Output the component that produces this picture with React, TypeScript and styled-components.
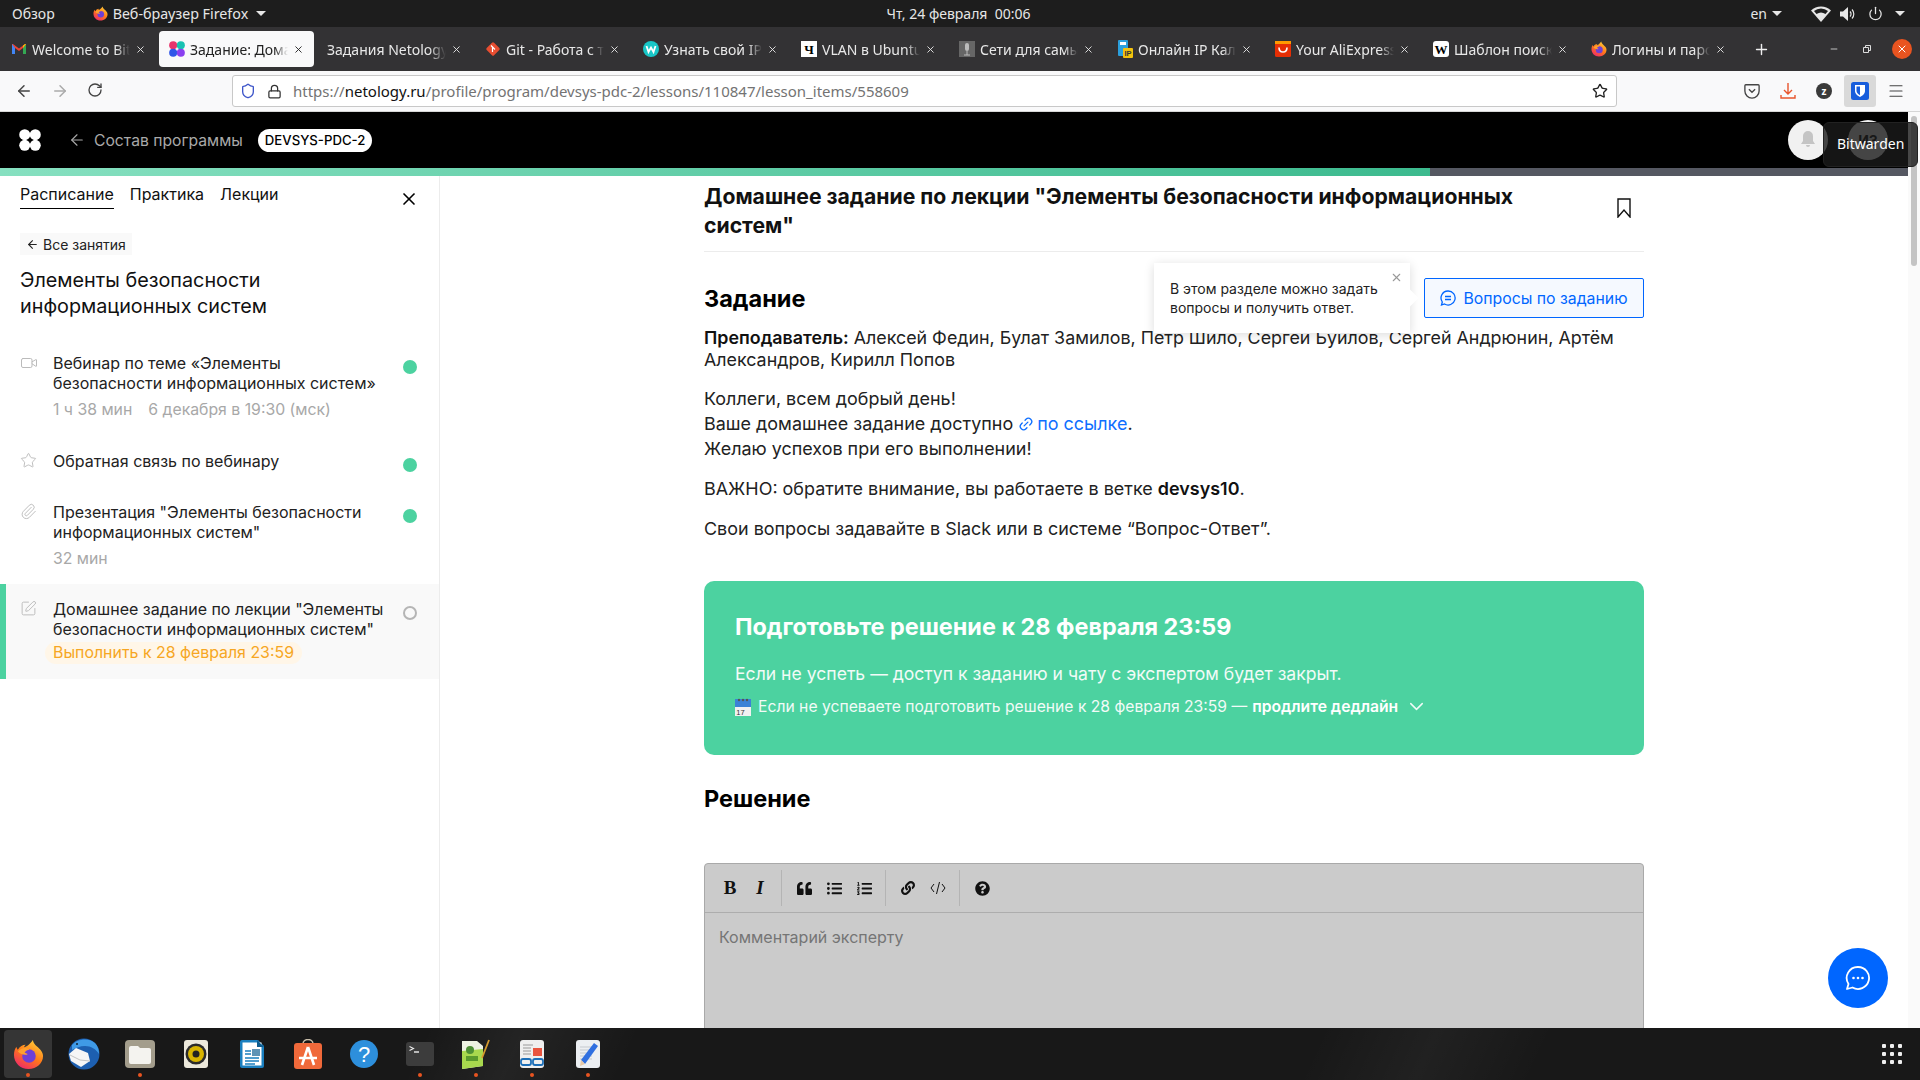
import React from "react";
import styled, { createGlobalStyle } from "styled-components";
import {
  ArrowLeft,
  ArrowRight,
  ChevronDown,
  Link2,
  Lock,
  Menu,
  Minus,
  Paperclip,
  Plus,
  Power,
  RotateCw,
  Shield,
  SquarePen,
  Star,
  Video,
  X,
} from "lucide-react";
import { FaLink, FaListOl, FaListUl, FaQuestionCircle, FaQuoteLeft } from "react-icons/fa";

const GlobalStyle = createGlobalStyle`
  html, body {
    margin: 0;
    padding: 0;
    width: 1920px;
    height: 1080px;
    overflow: hidden;
    background: #fff;
  }
  * {
    box-sizing: border-box;
  }
`;

const SYSTEM_FONT = `"Noto Sans", "Open Sans", sans-serif`;
const SITE_FONT = `Inter, "Noto Sans", sans-serif`;

const Screen = styled.div`
  width: 1920px;
  height: 1080px;
  display: flex;
  flex-direction: column;
  overflow: hidden;
  position: relative;
  font-family: ${SITE_FONT};
`;

/* gnome top bar */
const TopBar = styled.div`
  height: 27px;
  flex: none;
  background: #1d1d1d;
  color: #e6e6e6;
  font: 14px ${SYSTEM_FONT};
  display: grid;
  grid-template-columns: 1fr auto 1fr;
  align-items: center;
  padding: 0 15px 0 12px;
`;

const TopLeft = styled.div`
  display: flex;
  align-items: center;
  gap: 38px;
`;

const TopApp = styled.div`
  display: flex;
  align-items: center;
  gap: 5px;
  font-size: 14.3px;
`;

const TopRight = styled.div`
  display: flex;
  align-items: center;
  justify-content: flex-end;
`;

const Caret = styled.span`
  width: 0;
  height: 0;
  border-left: 5px solid transparent;
  border-right: 5px solid transparent;
  border-top: 5px solid #e6e6e6;
  display: inline-block;
  margin-left: 3px;
`;

const LangLabel = styled.span`
  margin-right: 29px;
  display: flex;
  align-items: center;
  gap: 2px;
`;

const TrayIcon = styled.span<{ $gap: number }>`
  display: flex;
  align-items: center;
  margin-right: ${(p) => p.$gap}px;
`;

/* firefox tabs */
const TabStrip = styled.div`
  height: 44px;
  flex: none;
  background: #333234;
  display: flex;
  align-items: center;
  padding-left: 1px;
`;

const Tab = styled.div<{ $active?: boolean }>`
  flex: 0 0 ${(p) => (p.$active ? 155 : 158)}px;
  margin-right: ${(p) => (p.$active ? 3 : 0)}px;
  min-width: 0;
  height: 36px;
  display: flex;
  align-items: center;
  padding: 0 ${(p) => (p.$active ? 10 : 13)}px 0 10px;
  gap: 5px;
  border-radius: 4px;
  background: ${(p) => (p.$active ? "#f9f9fa" : "transparent")};
  color: ${(p) => (p.$active ? "#222" : "#e8e8e8")};
  font: 14px ${SYSTEM_FONT};
`;

const TabTitle = styled.span`
  flex: 1;
  min-width: 0;
  overflow: hidden;
  white-space: nowrap;
  -webkit-mask-image: linear-gradient(to right, #000 86%, transparent);
  mask-image: linear-gradient(to right, #000 86%, transparent);
`;

const NewTab = styled.div`
  width: 44px;
  display: flex;
  justify-content: center;
  color: #eee;
`;

const WindowControls = styled.div`
  margin-left: auto;
  display: flex;
  align-items: center;
  gap: 15px;
  padding-right: 8px;
  color: #ddd;
`;

const WindowButton = styled.div`
  width: 18px;
  display: flex;
  justify-content: center;
`;

const CloseWindow = styled.div`
  width: 20px;
  height: 20px;
  margin-left: 1px;
  border-radius: 50%;
  background: #e95420;
  color: #fff;
  display: flex;
  align-items: center;
  justify-content: center;
`;

/* url row */
const NavBar = styled.div`
  height: 41px;
  flex: none;
  background: #f9f9fa;
  border-bottom: 1px solid #d6d6d6;
  display: flex;
  align-items: center;
  color: #444;
  padding-left: 15px;
`;

const NavButtons = styled.div`
  width: 217px;
  display: flex;
  gap: 18px;
`;

const UrlBox = styled.div`
  width: 1385px;
  height: 32px;
  background: #fff;
  border: 1px solid #c8c8c8;
  border-radius: 3px;
  display: flex;
  align-items: center;
  padding: 0 8px 0 7px;
  gap: 11px;
  font: 15px ${SYSTEM_FONT};
  color: #737373;
`;

const UrlText = styled.span`
  flex: 1;
  b {
    font-weight: 400;
    color: #111;
  }
`;

const NavTools = styled.div`
  flex: 1;
  display: flex;
  align-items: center;
  padding-left: 117px;
`;

const NavTool = styled.div<{ $selected?: boolean }>`
  flex: 0 0 36px;
  height: 32px;
  display: flex;
  align-items: center;
  justify-content: center;
  &::before {
    content: "";
    display: ${(p) => (p.$selected ? "block" : "none")};
    position: absolute;
    width: 32px;
    height: 32px;
    border-radius: 3px;
    background: #d9d9d9;
  }
  svg, div {
    position: relative;
  }
`;

const ZBadge = styled.div`
  width: 16px;
  height: 16px;
  border-radius: 50%;
  background: #3a3a3a;
  color: #fff;
  font: 700 10px ${SYSTEM_FONT};
  display: flex;
  align-items: center;
  justify-content: center;
`;

/* web page */
const PageRow = styled.div`
  flex: 1;
  min-height: 0;
  display: flex;
`;

const Page = styled.div`
  flex: 1;
  min-width: 0;
  display: flex;
  flex-direction: column;
`;

const Scrollbar = styled.div`
  flex: 0 0 12px;
  background: #fafafa;
  padding: 4px 3px 0;
`;

const ScrollThumb = styled.div`
  height: 150px;
  border-radius: 3px;
  background: #c4c4c4;
`;

const SiteHeader = styled.div`
  height: 56px;
  flex: none;
  background: #000;
  display: flex;
  align-items: center;
  padding-left: 19px;
`;

const BackLink = styled.div`
  display: flex;
  align-items: center;
  gap: 8px;
  margin-left: 27px;
  color: #a9a9a9;
  font-size: 15.7px;
`;

const CodePill = styled.div`
  margin-left: 15px;
  height: 23px;
  padding: 0 7px;
  border-radius: 12px;
  background: #fff;
  color: #000;
  font-size: 13.2px;
  font-weight: 500;
  display: flex;
  align-items: center;
`;

const HeaderRight = styled.div`
  margin-left: auto;
  display: flex;
  gap: 20px;
  padding-right: 20px;
`;

const Avatar = styled.div`
  width: 40px;
  height: 40px;
  border-radius: 50%;
  background: #f1f1f1;
  color: #111;
  font-size: 14px;
  font-weight: 700;
  display: flex;
  align-items: center;
  justify-content: center;
`;

const BrowserTip = styled.div`
  position: absolute;
  left: 1823px;
  top: 122px;
  width: 95px;
  height: 45px;
  background: rgba(26, 26, 26, 0.8);
  border: 1px solid #222;
  border-radius: 6px;
  color: #fff;
  font: 14px ${SYSTEM_FONT};
  display: flex;
  align-items: center;
  padding: 0 0 2px 13px;
`;

const ProgressTrack = styled.div`
  height: 8px;
  flex: none;
  background: #555862;
`;

const ProgressFill = styled.div`
  width: 1430px;
  height: 100%;
  background: linear-gradient(to right, #86e0c0, #3cba8e);
`;

const Body = styled.div`
  flex: 1;
  min-height: 0;
  display: flex;
  overflow: hidden;
`;

const Sidebar = styled.aside`
  flex: 0 0 440px;
  border-right: 1px solid #ececec;
`;

const SideTabs = styled.div`
  display: flex;
  align-items: flex-start;
  gap: 16px;
  padding: 7px 20px 0 20px;
`;

const SideTab = styled.div<{ $active?: boolean }>`
  font-size: 16px;
  line-height: 22px;
  color: #111;
  padding-bottom: 3px;
  border-bottom: 1.5px solid ${(p) => (p.$active ? "#000" : "transparent")};
`;

const SideClose = styled.div`
  margin-left: auto;
  margin-top: 6px;
  line-height: 0;
  color: #000;
`;

const AllLessons = styled.div`
  margin: 24px 0 0 20px;
  width: 112px;
  height: 22px;
  background: #f9f9f9;
  display: flex;
  align-items: center;
  gap: 4px;
  padding-left: 6px;
  font-size: 14px;
  color: #222;
`;

const LessonTitle = styled.h2`
  margin: 12px 0 0 20px;
  font-size: 19.8px;
  line-height: 26px;
  font-weight: 400;
  color: #111;
`;

const LessonList = styled.div`
  margin-top: 34px;
  display: flex;
  flex-direction: column;
`;

const LessonItem = styled.div<{ $active?: boolean; $height: number; $pad?: number }>`
  height: ${(p) => p.$height}px;
  display: grid;
  grid-template-columns: 33px 1fr 14px;
  padding: ${(p) => p.$pad ?? 0}px 22px 0 20px;
  background: ${(p) => (p.$active ? "#f9f9f9" : "transparent")};
  box-shadow: ${(p) => (p.$active ? "inset 6px 0 0 #4cd2a0" : "none")};
`;

const LessonIcon = styled.div`
  color: #b9b9b9;
  padding-top: 1px;
  line-height: 0;
`;

const LessonName = styled.div`
  font-size: 16px;
  line-height: 20px;
  color: #222;
`;

const LessonMeta = styled.div`
  margin-top: 7px;
  font-size: 15.8px;
  line-height: 20px;
  color: #a8a8a8;
  display: flex;
  gap: 16px;
`;

const DeadlinePill = styled.div`
  margin: 3px 0 0 -8px;
  width: 257px;
  height: 22px;
  padding-left: 8px;
  border-radius: 11px;
  background: #fff6e8;
  color: #f6a623;
  font-size: 15.9px;
  line-height: 22px;
`;

const StatusDot = styled.div<{ $done?: boolean }>`
  width: 14px;
  height: 14px;
  margin-top: 7px;
  border-radius: 50%;
  background: ${(p) => (p.$done ? "#4cd2a0" : "transparent")};
  border: ${(p) => (p.$done ? "none" : "2px solid #b5b5b5")};
`;

const Main = styled.main`
  margin-left: 264px;
  width: 940px;
  flex: none;
`;

const TitleRow = styled.div`
  display: flex;
  justify-content: space-between;
  height: 76px;
  padding-top: 6px;
  border-bottom: 1px solid #ececec;
`;

const PageTitle = styled.h1`
  margin: 0;
  width: 830px;
  font-size: 21.2px;
  line-height: 29px;
  font-weight: 700;
  color: #111;
`;

const BookmarkBox = styled.div`
  padding: 16px 13px 0 0;
  line-height: 0;
`;

const TaskHead = styled.div`
  position: relative;
  margin-top: 26px;
  height: 40px;
  display: flex;
  align-items: center;
  justify-content: space-between;
`;

const SectionTitle = styled.h2`
  margin: 0;
  font-size: 23.5px;
  line-height: 30px;
  font-weight: 700;
  color: #000;
`;

const TaskTitle = styled(SectionTitle)`
  padding-top: 2px;
`;

const QuestionsButton = styled.button`
  width: 220px;
  height: 40px;
  border: 1px solid #0066ff;
  background: #f5f9ff;
  border-radius: 2px;
  color: #0066ff;
  font: 15.8px ${SITE_FONT};
  display: flex;
  align-items: center;
  justify-content: center;
  gap: 7px;
`;

const HintBox = styled.div`
  position: absolute;
  left: 450px;
  top: -15px;
  width: 256px;
  height: 70px;
  padding: 16px 16px 0;
  background: #fff;
  box-shadow: 0 2px 10px rgba(0, 0, 0, 0.14);
  font-size: 14px;
  line-height: 19px;
  color: #222;
  z-index: 2;
  &::after {
    content: "";
    position: absolute;
    right: -6px;
    top: 29px;
    width: 12px;
    height: 12px;
    background: #fff;
    transform: rotate(45deg);
  }
`;

const HintClose = styled.span`
  position: absolute;
  right: 7px;
  top: 8px;
  line-height: 0;
  color: #999;
`;

const Paragraph = styled.p<{ $tight?: boolean; $gap: number }>`
  margin: ${(p) => p.$gap}px 0 0;
  font-size: ${(p) => (p.$tight ? 17.85 : 17.95)}px;
  line-height: ${(p) => (p.$tight ? 22 : 25)}px;
  color: #222;
  b {
    font-weight: 600;
    color: #111;
  }
`;

const DocLink = styled.a`
  color: #0f6fff;
  text-decoration: none;
  svg {
    vertical-align: -2px;
    margin-right: 3px;
    transform: rotate(-45deg);
  }
`;

const DeadlineCard = styled.section`
  margin-top: 40px;
  height: 174px;
  padding: 30px 30px 0 31px;
  border-radius: 10px;
  background: #4cd2a0;
  color: #fff;
`;

const CardTitle = styled.div`
  font-size: 23.4px;
  line-height: 32px;
  font-weight: 700;
`;

const CardText = styled.div`
  margin-top: 19px;
  font-size: 17.6px;
  line-height: 24px;
  color: #f1fbf7;
`;

const CardNote = styled.div`
  margin-top: 9px;
  font-size: 15.7px;
  line-height: 22px;
  display: flex;
  align-items: center;
  color: #f1fbf7;
  b {
    font-weight: 600;
    color: #fff;
    margin: 0 7px 0 5px;
  }
`;

const NoteText = styled.span`
  margin-left: 7px;
`;

const SolutionTitle = styled(SectionTitle)`
  margin-top: 29px;
`;

const Editor = styled.div`
  margin-top: 49px;
  height: 220px;
  background: #cbcbcb;
  border: 1px solid #a9a9a9;
  border-radius: 4px 4px 0 0;
`;

const EditorTools = styled.div`
  height: 49px;
  border-bottom: 1px solid #adadad;
  display: flex;
  align-items: center;
  padding-left: 10px;
  color: #111;
`;

const ToolButton = styled.span<{ $italic?: boolean }>`
  width: 30px;
  height: 30px;
  display: flex;
  align-items: center;
  justify-content: center;
  font: ${(p) => (p.$italic ? "italic " : "")}700 19px "Liberation Serif", serif;
`;

const ToolDivider = styled.span`
  width: 1px;
  height: 36px;
  background: #b4b4b4;
  margin: 0 7px 0 6px;
`;

const EditorPlaceholder = styled.div`
  padding: 12px 14px 0;
  font-size: 16px;
  line-height: 24px;
  color: #757575;
`;

const ChatButton = styled.div`
  position: absolute;
  left: 1828px;
  top: 948px;
  width: 60px;
  height: 60px;
  border-radius: 50%;
  background: #0066ff;
  display: flex;
  align-items: center;
  justify-content: center;
  z-index: 3;
`;

/* ubuntu dock */
const Dock = styled.div`
  height: 52px;
  flex: none;
  background:
    linear-gradient(115deg, transparent 22%, rgba(255, 255, 255, 0.05) 27%, transparent 33%),
    linear-gradient(115deg, transparent 68%, rgba(255, 255, 255, 0.04) 74%, transparent 80%),
    #181818;
  display: flex;
  align-items: center;
  position: relative;
`;

const DockItem = styled.div<{ $active?: boolean; $running?: boolean }>`
  flex: 0 0 ${(p) => (p.$active ? 48 : 56)}px;
  margin: 0 ${(p) => (p.$active ? 4 : 0)}px;
  height: 48px;
  border-radius: 4px;
  background: ${(p) => (p.$active ? "rgba(255,255,255,0.13)" : "transparent")};
  display: flex;
  align-items: center;
  justify-content: center;
  position: relative;
  &::after {
    content: "";
    display: ${(p) => (p.$running ? "block" : "none")};
    position: absolute;
    bottom: 1px;
    left: 50%;
    margin-left: -2px;
    width: 4px;
    height: 4px;
    border-radius: 50%;
    background: #e95420;
  }
`;

const AppGrid = styled.div`
  margin-left: auto;
  margin-right: 18px;
  display: grid;
  grid-template-columns: repeat(3, 4px);
  gap: 4px;
  span {
    width: 4px;
    height: 4px;
    background: #eee;
    border-radius: 1px;
  }
`;

const NetologyMark = ({ size, colors }: { size: number; colors: string[] }) => (
  <svg width={size} height={size} viewBox="0 0 20 20">
    <circle cx="5.2" cy="5.2" r="5" fill={colors[0]} />
    <circle cx="14.8" cy="5.2" r="5" fill={colors[1]} />
    <circle cx="5.2" cy="14.8" r="5" fill={colors[2]} />
    <circle cx="14.8" cy="14.8" r="5" fill={colors[3]} />
  </svg>
);

const FirefoxIcon = ({ size, id }: { size: number; id: string }) => (
  <svg width={size} height={size} viewBox="0 0 32 32">
    <defs>
      <linearGradient id={id} x1="0.8" y1="0" x2="0.2" y2="1">
        <stop offset="0" stopColor="#ffd43b" />
        <stop offset="0.5" stopColor="#ff7a18" />
        <stop offset="1" stopColor="#f0246e" />
      </linearGradient>
    </defs>
    <path d="M16 31C7.500 31 1 24.500 1 16.500 1 13 2 10 3.500 8c.3 1.500 1 2.500 1.500 3C7 7.500 10 6 13 6c-1 1-1.500 2-1.500 2.500C14 8 17 6 20.500 1c.5 3 2 4.500 4 6.500 3.500 3 6.500 6 6.500 10C31 25 24.500 31 16 31z" fill={`url(#${id})`} />
    <circle cx="16.500" cy="17.500" r="7" fill="#6e3fd6" />
    <path d="M5 13c3-4 9-5 12-2-2 0-4 1-5 3 1 1 3 1 3 2-3 1-7 0-10-3z" fill="#ffa02e" />
  </svg>
);

const Gmail = () => (
  <svg width="16" height="16" viewBox="0 0 16 16">
    <path d="M1 3v10h3V7l4 3 4-3v6h3V3h-1L8 7.500 2 3z" fill="#ea4335" />
    <path d="M1 3v10h3V7z" fill="#4285f4" />
    <path d="M15 3v10h-3V7z" fill="#34a853" />
    <path d="M12 7l3-4h-1L12 4.500z" fill="#fbbc04" />
  </svg>
);

const GitIcon = () => (
  <svg width="16" height="16" viewBox="0 0 16 16">
    <rect x="2.800" y="2.800" width="10.400" height="10.400" rx="1.500" transform="rotate(45 8 8)" fill="#e84e31" />
    <path d="M6 4.500l4 4M7.500 6v5" stroke="#fff" strokeWidth="1.200" />
  </svg>
);

const WhoerIcon = () => (
  <svg width="16" height="16" viewBox="0 0 16 16">
    <circle cx="8" cy="8" r="8" fill="#19c7c7" />
    <path d="M3.500 5l2 6 2.500-4.500L10.500 11l2-6" fill="none" stroke="#fff" strokeWidth="1.800" />
  </svg>
);

const LetterTile = ({ children, serif }: { children: string; serif?: boolean }) => (
  <svg width="16" height="16" viewBox="0 0 16 16">
    <rect width="16" height="16" rx={serif ? 3 : 0} fill="#fff" />
    <text x="8" y="12.500" textAnchor="middle" fontFamily="Liberation Serif, serif" fontWeight="700" fontSize="13" fill="#000">
      {children}
    </text>
  </svg>
);

const NetworksIcon = () => (
  <svg width="16" height="16" viewBox="0 0 16 16">
    <rect width="16" height="16" fill="#666" />
    <rect x="6" y="2" width="4" height="8" rx="2" fill="#bbb" />
    <path d="M8 10v4M5 14h6" stroke="#bbb" />
  </svg>
);

const CalcIcon = () => (
  <svg width="16" height="18" viewBox="0 0 16 18">
    <rect x="1" y="0" width="10" height="16" rx="1" fill="#2b9fdc" />
    <rect x="3" y="2" width="6" height="3" fill="#fff" />
    <rect x="6" y="8" width="10" height="10" rx="1" fill="#f4c20d" />
    <text x="11" y="16" textAnchor="middle" fontFamily="Liberation Sans, sans-serif" fontWeight="700" fontSize="7.500" fill="#333">
      IP
    </text>
  </svg>
);

const AliIcon = () => (
  <svg width="16" height="16" viewBox="0 0 16 16">
    <rect width="16" height="16" rx="1.500" fill="#e62e04" />
    <rect width="16" height="3" fill="#ff9a00" />
    <path d="M4 6.500c0 6 8 6 8 0" fill="none" stroke="#fff" strokeWidth="1.600" />
  </svg>
);

const FolderIcon = () => (
  <svg width="30" height="28" viewBox="0 0 30 28">
    <rect width="30" height="28" rx="4" fill="#a39d8c" />
    <path d="M4 8a2 2 0 0 1 2-2h7l2 2h9a2 2 0 0 1 2 2v12a2 2 0 0 1-2 2H6a2 2 0 0 1-2-2z" fill="#f4f3ef" />
  </svg>
);

const ThunderbirdIcon = () => (
  <svg width="32" height="32" viewBox="0 0 32 32">
    <circle cx="16" cy="16" r="15.500" fill="#1d5fb0" />
    <path d="M4 7C9 1 20-1 27 5c3 3 4 7 4 11-3-5-8-8-14-8-5 0-9 2-13 4z" fill="#3f9ae6" />
    <path d="M1 16L8 10l12 5 2 8-9 6-10-6z" fill="#f6f6f6" />
    <path d="M2 17l10 5 10 1" fill="none" stroke="#c4c4c4" />
    <circle cx="9" cy="6" r="1" fill="#123" />
  </svg>
);

const SpeakerIcon = () => (
  <svg width="24" height="28" viewBox="0 0 24 28">
    <rect width="24" height="28" rx="3" fill="#ece8db" />
    <circle cx="12" cy="14" r="10.500" fill="#2b2b2b" />
    <circle cx="12" cy="14" r="8" fill="#d8b400" />
    <circle cx="12" cy="14" r="3.500" fill="#222" />
  </svg>
);

const WriterIcon = () => (
  <svg width="24" height="28" viewBox="0 0 24 28">
    <path d="M0 2a2 2 0 0 1 2-2h16l6 6v20a2 2 0 0 1-2 2H2a2 2 0 0 1-2-2z" fill="#1a7fbf" />
    <rect x="2.500" y="2.500" width="19" height="23" fill="#fff" />
    <path d="M17 0l7 7h-7z" fill="#0d5c8f" />
    <path d="M5 11h6M5 14h6M5 18h14M5 21h14M5 24h10" stroke="#1a7fbf" strokeWidth="1.300" />
    <rect x="12" y="9" width="8" height="7" fill="#5f93b5" />
  </svg>
);

const StoreIcon = () => (
  <svg width="28" height="30" viewBox="0 0 28 30">
    <path d="M9 5c0-6 10-6 10 0" fill="none" stroke="#c8bda9" strokeWidth="1.500" />
    <rect y="4" width="28" height="26" rx="3" fill="#f0693a" />
    <path d="M14 8l-6 18M14 8l6 18M5 19h18" stroke="#fff" strokeWidth="2.600" fill="none" />
  </svg>
);

const HelpIcon = () => (
  <svg width="28" height="28" viewBox="0 0 28 28">
    <circle cx="14" cy="14" r="14" fill="#2d8fdc" />
    <text x="14" y="22" textAnchor="middle" fontFamily="Liberation Sans, sans-serif" fontSize="22" fill="#fff">
      ?
    </text>
  </svg>
);

const TerminalIcon = () => (
  <svg width="28" height="24" viewBox="0 0 28 24">
    <rect width="28" height="24" rx="3" fill="#3c3c3c" />
    <path d="M3.500 4.500l4 2-4 2" fill="none" stroke="#eee" strokeWidth="1.100" />
    <path d="M8 10h5" stroke="#eee" strokeWidth="1.400" />
  </svg>
);

const GreenDocIcon = () => (
  <svg width="30" height="30" viewBox="0 0 30 30">
    <path d="M1 2h15l6 5v20L1 30z" fill="#eef2e2" />
    <path d="M1 12l21-2v17L1 30z" fill="#a8d84e" />
    <circle cx="9" cy="11" r="4" fill="#4d8f35" />
    <rect x="5" y="17" width="12" height="5" fill="#5a9a2d" />
    <path d="M21 19L28 1" stroke="#d69a2d" strokeWidth="1.800" />
  </svg>
);

const ReaderIcon = () => (
  <svg width="24" height="28" viewBox="0 0 24 28">
    <rect width="24" height="28" rx="3" fill="#efefef" />
    <path d="M3 5h10M3 8h8M3 11h8M3 14h8" stroke="#999" />
    <rect x="13" y="8" width="9" height="8" fill="#e8543f" />
    <rect x="1" y="19" width="10" height="6" rx="2" fill="none" stroke="#1d6fb8" strokeWidth="1.800" />
    <rect x="13" y="19" width="10" height="6" rx="2" fill="none" stroke="#1d6fb8" strokeWidth="1.800" />
  </svg>
);

const EditIcon = () => (
  <svg width="24" height="28" viewBox="0 0 24 28">
    <rect width="24" height="28" rx="3" fill="#eceff2" />
    <path d="M4 7h12M4 10h12M4 13h12M4 16h12M4 19h12" stroke="#c5c9cf" />
    <path d="M5 20L18 3l4 3L9 24z" fill="#2f6fe0" />
    <path d="M5 20l-1 6 5-2z" fill="#e6c9a8" />
  </svg>
);

const CalendarEmoji = () => (
  <svg width="16" height="18" viewBox="0 0 16 18">
    <rect y="1" width="16" height="17" fill="#f1f1f1" />
    <rect y="1" width="16" height="8" fill="#3b82d6" />
    <circle cx="4" cy="2" r="1.200" fill="#555" />
    <circle cx="8" cy="2" r="1.200" fill="#555" />
    <circle cx="12" cy="2" r="1.200" fill="#555" />
    <text x="5.500" y="16.500" textAnchor="middle" fontFamily="Liberation Sans, sans-serif" fontSize="7.500" fill="#333">
      17
    </text>
  </svg>
);

const BitwardenShield = () => (
  <svg width="18" height="18" viewBox="0 0 18 18">
    <rect width="18" height="18" rx="2.500" fill="#175ddc" />
    <path d="M4 3h10v6c0 3-3 5-5 6-2-1-5-3-5-6z" fill="#fff" />
    <path d="M9 4.500H5.500V9c0 2 2 3.300 3.500 4.200z" fill="#175ddc" />
  </svg>
);

const PocketIcon = () => (
  <svg width="16" height="16" viewBox="0 0 18 18">
    <path d="M2 2h14a1 1 0 0 1 1 1v6a8 8 0 0 1-16 0V3a1 1 0 0 1 1-1z" fill="none" stroke="#444" strokeWidth="1.500" />
    <path d="M5.500 7L9 10.500 12.500 7" fill="none" stroke="#444" strokeWidth="1.500" />
  </svg>
);

const WifiIcon = () => (
  <svg width="20" height="16" viewBox="0 0 20 16">
    <path d="M0 4.500a14.500 14.500 0 0 1 20 0L10 16z" fill="#e6e6e6" />
    <path d="M3 5a11 11 0 0 1 14 0l-2.500 3a8 8 0 0 0-9 0z" fill="#1d1d1d" />
  </svg>
);

const VolumeIcon = () => (
  <svg width="16" height="16" viewBox="0 0 16 16" fill="none">
    <path d="M0 5.500h3L8 1v14l-5-4.500H0z" fill="#e6e6e6" />
    <path d="M10 5.500a3.500 3.500 0 0 1 0 5M12 3.500a6.500 6.500 0 0 1 0 9" stroke="#e6e6e6" strokeWidth="1.200" />
  </svg>
);

const BookmarkIcon = () => (
  <svg width="14" height="20" viewBox="0 0 14 20" fill="none" stroke="#111" strokeWidth="1.400">
    <path d="M1 1h12v18L7 12 1 19z" />
  </svg>
);

const ChatIcon = () => (
  <svg width="26" height="26" viewBox="0 0 26 26">
    <path d="M13 2a11 11 0 1 1-5.500 20.500L2 24l1.500-5A11 11 0 0 1 13 2z" fill="none" stroke="#fff" strokeWidth="1.800" strokeLinejoin="round" />
    <circle cx="8.500" cy="13" r="1.300" fill="#fff" />
    <circle cx="13" cy="13" r="1.300" fill="#fff" />
    <circle cx="17.500" cy="13" r="1.300" fill="#fff" />
  </svg>
);

const QuestionsIcon = () => (
  <svg width="16" height="16" viewBox="0 0 16 16">
    <path d="M8 1a7 7 0 1 1-3.500 13L1.500 15l.8-3A7 7 0 0 1 8 1z" fill="none" stroke="#0066ff" strokeWidth="1.300" />
    <path d="M5 6.500h6M5 9.500h6" stroke="#0066ff" strokeWidth="1.300" />
  </svg>
);

const NETOLOGY_COLORS = ["#e8356d", "#19c2b2", "#2f55e8", "#8a3ff0"];

const TABS = [
  { title: "Welcome to Bitwarden", icon: <Gmail /> },
  { title: "Задание: Домашнее", icon: <NetologyMark size={16} colors={NETOLOGY_COLORS} />, active: true },
  { title: "Задания Netology", icon: null },
  { title: "Git - Работа с тегами", icon: <GitIcon /> },
  { title: "Узнать свой IP адрес", icon: <WhoerIcon /> },
  { title: "VLAN в Ubuntu", icon: <LetterTile>Ч</LetterTile> },
  { title: "Сети для самых", icon: <NetworksIcon /> },
  { title: "Онлайн IP Калькулятор", icon: <CalcIcon /> },
  { title: "Your AliExpress", icon: <AliIcon /> },
  { title: "Шаблон поиска", icon: <LetterTile serif>W</LetterTile> },
  { title: "Логины и пароли", icon: <FirefoxIcon size={16} id="ff-tab" /> },
];

const DOCK_APPS = [
  { icon: <FirefoxIcon size={31} id="ff-dock" />, active: true, running: true },
  { icon: <ThunderbirdIcon /> },
  { icon: <FolderIcon />, running: true },
  { icon: <SpeakerIcon /> },
  { icon: <WriterIcon /> },
  { icon: <StoreIcon /> },
  { icon: <HelpIcon /> },
  { icon: <TerminalIcon />, running: true },
  { icon: <GreenDocIcon />, running: true },
  { icon: <ReaderIcon />, running: true },
  { icon: <EditIcon />, running: true },
];

export default function App() {
  return (
    <Screen>
      <GlobalStyle />
      <TopBar>
        <TopLeft>
          <span>Обзор</span>
          <TopApp>
            <FirefoxIcon size={15} id="ff-top" />
            Веб-браузер Firefox
            <Caret />
          </TopApp>
        </TopLeft>
        <span>Чт, 24 февраля&nbsp; 00:06</span>
        <TopRight>
          <LangLabel>
            en
            <Caret />
          </LangLabel>
          <TrayIcon $gap={9}>
            <WifiIcon />
          </TrayIcon>
          <TrayIcon $gap={12}>
            <VolumeIcon />
          </TrayIcon>
          <TrayIcon $gap={9}>
            <Power size={15} />
          </TrayIcon>
          <Caret />
        </TopRight>
      </TopBar>

      <TabStrip>
        {TABS.map((tab) => (
          <Tab key={tab.title} $active={tab.active}>
            {tab.icon}
            <TabTitle>{tab.title}</TabTitle>
            <X size={11} />
          </Tab>
        ))}
        <NewTab>
          <Plus size={17} />
        </NewTab>
        <WindowControls>
          <WindowButton>
            <Minus size={10} />
          </WindowButton>
          <WindowButton>
            <svg width="10" height="10" viewBox="0 0 10 10">
              <path d="M1.500 3.500h5v5h-5zM3.500 3.500v-2h5v5h-2" fill="none" stroke="#ddd" />
            </svg>
          </WindowButton>
          <CloseWindow>
            <X size={12} />
          </CloseWindow>
        </WindowControls>
      </TabStrip>

      <NavBar>
        <NavButtons>
          <ArrowLeft size={18} />
          <ArrowRight size={18} color="#aaa" />
          <RotateCw size={16} />
        </NavButtons>
        <UrlBox>
          <Shield size={16} color="#3d55c9" />
          <Lock size={15} color="#333" />
          <UrlText>
            https://<b>netology.ru</b>/profile/program/devsys-pdc-2/lessons/110847/lesson_items/558609
          </UrlText>
          <Star size={16} color="#222" />
        </UrlBox>
        <NavTools>
          <NavTool>
            <PocketIcon />
          </NavTool>
          <NavTool>
            <svg width="18" height="18" viewBox="0 0 18 18" fill="none" stroke="#e8552d" strokeWidth="1.400">
              <path d="M9 1v11M5 8l4 4 4-4M2 13v3h14v-3" />
            </svg>
          </NavTool>
          <NavTool>
            <ZBadge>z</ZBadge>
          </NavTool>
          <NavTool $selected>
            <BitwardenShield />
          </NavTool>
          <NavTool>
            <Menu size={18} strokeWidth={1.500} />
          </NavTool>
        </NavTools>
      </NavBar>

      <PageRow>
        <Page>
          <SiteHeader>
            <NetologyMark size={22} colors={["#fff", "#fff", "#fff", "#fff"]} />
            <BackLink>
              <ArrowLeft size={18} strokeWidth={1.500} />
              Состав программы
            </BackLink>
            <CodePill>DEVSYS-PDC-2</CodePill>
            <HeaderRight>
              <Avatar>
                <svg width="16" height="18" viewBox="0 0 16 18" fill="#c4c4c4">
                  <path d="M8 0a5 5 0 0 1 5 5v5l2 3H1l2-3V5a5 5 0 0 1 5-5zM6 14h4a2 2 0 0 1-4 0z" />
                </svg>
              </Avatar>
              <Avatar>ИЗ</Avatar>
            </HeaderRight>
          </SiteHeader>
          <ProgressTrack>
            <ProgressFill />
          </ProgressTrack>

          <Body>
            <Sidebar>
              <SideTabs>
                <SideTab $active>Расписание</SideTab>
                <SideTab>Практика</SideTab>
                <SideTab>Лекции</SideTab>
                <SideClose>
                  <X size={20} strokeWidth={2} />
                </SideClose>
              </SideTabs>
              <AllLessons>
                <ArrowLeft size={13} />
                Все занятия
              </AllLessons>
              <LessonTitle>
                Элементы безопасности
                <br />
                информационных систем
              </LessonTitle>
              <LessonList>
                <LessonItem $height={90}>
                  <LessonIcon>
                    <Video size={18} strokeWidth={1.300} />
                  </LessonIcon>
                  <div>
                    <LessonName>
                      Вебинар по теме «Элементы
                      <br />
                      безопасности информационных систем»
                    </LessonName>
                    <LessonMeta>
                      <span>1 ч 38 мин</span>
                      <span>6 декабря в 19:30 (мск)</span>
                    </LessonMeta>
                  </div>
                  <StatusDot $done />
                </LessonItem>
                <LessonItem $height={59} $pad={8}>
                  <LessonIcon>
                    <Star size={17} strokeWidth={1.300} />
                  </LessonIcon>
                  <LessonName>Обратная связь по вебинару</LessonName>
                  <StatusDot $done />
                </LessonItem>
                <LessonItem $height={82}>
                  <LessonIcon>
                    <Paperclip size={17} strokeWidth={1.300} />
                  </LessonIcon>
                  <div>
                    <LessonName>
                      Презентация "Элементы безопасности
                      <br />
                      информационных систем"
                    </LessonName>
                    <LessonMeta>
                      <span>32 мин</span>
                    </LessonMeta>
                  </div>
                  <StatusDot $done />
                </LessonItem>
                <LessonItem $height={95} $pad={15} $active>
                  <LessonIcon>
                    <SquarePen size={17} strokeWidth={1.300} />
                  </LessonIcon>
                  <div>
                    <LessonName>
                      Домашнее задание по лекции "Элементы
                      <br />
                      безопасности информационных систем"
                    </LessonName>
                    <DeadlinePill>Выполнить к 28 февраля 23:59</DeadlinePill>
                  </div>
                  <StatusDot />
                </LessonItem>
              </LessonList>
            </Sidebar>

            <Main>
              <TitleRow>
                <PageTitle>Домашнее задание по лекции "Элементы безопасности информационных систем"</PageTitle>
                <BookmarkBox>
                  <BookmarkIcon />
                </BookmarkBox>
              </TitleRow>

              <TaskHead>
                <TaskTitle>Задание</TaskTitle>
                <HintBox>
                  В этом разделе можно задать вопросы и получить ответ.
                  <HintClose>
                    <X size={13} />
                  </HintClose>
                </HintBox>
                <QuestionsButton>
                  <QuestionsIcon />
                  Вопросы по заданию
                </QuestionsButton>
              </TaskHead>

              <Paragraph $tight $gap={9}>
                <b>Преподаватель:</b> Алексей Федин, Булат Замилов, Петр Шило, Сергей Буйлов, Сергей Андрюнин, Артём
                Александров, Кирилл Попов
              </Paragraph>
              <Paragraph $gap={15}>
                Коллеги, всем добрый день!
                <br />
                Ваше домашнее задание доступно{" "}
                <DocLink>
                  <Link2 size={16} />
                  по ссылке
                </DocLink>
                .
                <br />
                Желаю успехов при его выполнении!
              </Paragraph>
              <Paragraph $gap={15}>
                ВАЖНО: обратите внимание, вы работаете в ветке <b>devsys10</b>.
              </Paragraph>
              <Paragraph $gap={15}>Свои вопросы задавайте в Slack или в системе “Вопрос-Ответ”.</Paragraph>

              <DeadlineCard>
                <CardTitle>Подготовьте решение к 28 февраля 23:59</CardTitle>
                <CardText>Если не успеть — доступ к заданию и чату с экспертом будет закрыт.</CardText>
                <CardNote>
                  <CalendarEmoji />
                  <NoteText>Если не успеваете подготовить решение к 28 февраля 23:59 —</NoteText>
                  <b>продлите дедлайн</b>
                  <ChevronDown size={23} strokeWidth={1.500} />
                </CardNote>
              </DeadlineCard>

              <SolutionTitle>Решение</SolutionTitle>

              <Editor>
                <EditorTools>
                  <ToolButton>B</ToolButton>
                  <ToolButton $italic>I</ToolButton>
                  <ToolDivider />
                  <ToolButton>
                    <FaQuoteLeft size={15} />
                  </ToolButton>
                  <ToolButton>
                    <FaListUl size={15} />
                  </ToolButton>
                  <ToolButton>
                    <FaListOl size={15} />
                  </ToolButton>
                  <ToolDivider />
                  <ToolButton>
                    <FaLink size={14} />
                  </ToolButton>
                  <ToolButton>
                    <svg width="16" height="14" viewBox="0 0 16 14" fill="none" stroke="#111" strokeWidth="1">
                      <path d="M4 3L1 7l3 4M12 3l3 4-3 4M9.500 1L6.500 13" />
                    </svg>
                  </ToolButton>
                  <ToolDivider />
                  <ToolButton>
                    <FaQuestionCircle size={15} />
                  </ToolButton>
                </EditorTools>
                <EditorPlaceholder>Комментарий эксперту</EditorPlaceholder>
              </Editor>
            </Main>
          </Body>
        </Page>
        <Scrollbar>
          <ScrollThumb />
        </Scrollbar>
      </PageRow>

      <Dock>
        {DOCK_APPS.map((app, i) => (
          <DockItem key={i} $active={app.active} $running={app.running}>
            {app.icon}
          </DockItem>
        ))}
        <AppGrid>
          {Array.from({ length: 9 }).map((_, i) => (
            <span key={i} />
          ))}
        </AppGrid>
      </Dock>

      <BrowserTip>Bitwarden</BrowserTip>
      <ChatButton>
        <ChatIcon />
      </ChatButton>
    </Screen>
  );
}
